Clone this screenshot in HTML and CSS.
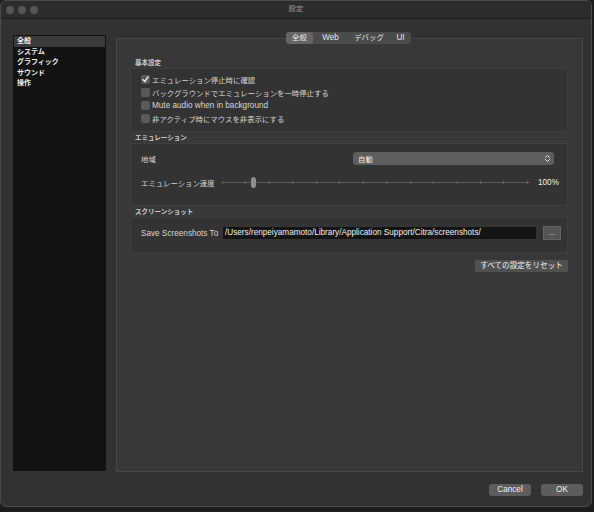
FILE: index.html
```html
<!DOCTYPE html>
<html lang="ja">
<head>
<meta charset="utf-8">
<title>設定</title>
<link rel="stylesheet" href="styles.css">
</head>
<body>
<div class="window">
  <div class="titlebar">
    <div class="lights"><span></span><span></span><span></span></div>
    <div class="title">設定</div>
  </div>
  <div class="main">
    <ul class="sidebar">
      <li class="sel">全般</li>
      <li>システム</li>
      <li>グラフィック</li>
      <li>サウンド</li>
      <li>操作</li>
    </ul>
    <div class="pane">
      <div class="tabs">
        <span class="tab t1 active">全般</span>
        <span class="tab t2">Web</span>
        <span class="tab t3">デバッグ</span>
        <span class="tab t4">UI</span>
      </div>

      <div class="gtitle first">基本設定</div>
      <div class="group g1">
        <label class="check"><span class="box on"><svg viewBox="0 0 9 9" width="9" height="9"><path d="M2 4.6 L3.8 6.6 L7 1.8" fill="none" stroke="#f2f2f2" stroke-width="1.4" stroke-linecap="round" stroke-linejoin="round"/></svg></span><span class="ja">エミュレーション停止時に確認</span></label>
        <label class="check"><span class="box"></span><span class="ja">バックグラウンドでエミュレーションを一時停止する</span></label>
        <label class="check"><span class="box"></span>Mute audio when in background</label>
        <label class="check"><span class="box"></span><span class="ja">非アクティブ時にマウスを非表示にする</span></label>
      </div>

      <div class="gtitle">エミュレーション</div>
      <div class="group g2">
        <div class="row region">
          <span class="lbl ja">地域</span>
          <div class="combo"><span class="ja">自動</span>
            <svg viewBox="0 0 7 9" width="7" height="9"><path d="M1.5 3.5 L3.5 1.5 L5.5 3.5 M1.5 5.5 L3.5 7.5 L5.5 5.5" fill="none" stroke="#e8e8e8" stroke-width="1" stroke-linecap="round" stroke-linejoin="round"/></svg>
          </div>
        </div>
        <div class="row speed">
          <span class="lbl slbl ja">エミュレーション速度</span>
          <div class="slider">
            <div class="track"></div>
            <div class="ticks">
              <i></i><i></i><i></i><i></i><i></i><i></i><i></i><i></i><i></i><i></i><i></i><i></i><i></i><i class="end"></i>
            </div>
            <div class="handle"></div>
          </div>
          <span class="pct">100%</span>
        </div>
      </div>

      <div class="gtitle">スクリーンショット</div>
      <div class="group g3">
        <div class="row shot">
          <span class="lbl plbl">Save Screenshots To</span>
          <div class="path">/Users/renpeiyamamoto/Library/Application Support/Citra/screenshots/</div>
          <button class="dots">...</button>
        </div>
      </div>

      <div class="resetrow"><button class="btn reset">すべての設定をリセット</button></div>
    </div>
  </div>
  <div class="footer">
    <button class="btn fbtn">Cancel</button>
    <button class="btn fbtn">OK</button>
  </div>
</div>
</body>
</html>
```

FILE: styles.css
```css
* { box-sizing: border-box; }
html, body {
  margin: 0;
  padding: 0;
  background: #1d1d1d;
  width: 594px;
  height: 512px;
  overflow: hidden;
}
body {
  font-family: "Liberation Sans", "Noto Sans CJK JP", sans-serif;
  font-size: 8.2px;
  color: #d6d6d6;
}
.ja { font-size: 7.4px; }
.window {
  width: 592px;
  height: 507px;
  background: #323232;
  border: 1px solid #4a4a4a;
  border-radius: 6px;
  overflow: hidden;
  display: flex;
  flex-direction: column;
}
.titlebar {
  height: 18px;
  flex: none;
  background: #2c2c2c;
  border-bottom: 1px solid #1c1c1c;
  position: relative;
  display: flex;
  align-items: center;
}
.lights {
  display: flex;
  gap: 4px;
  padding-left: 5px;
}
.lights span {
  width: 8px;
  height: 8px;
  border-radius: 50%;
  background: #555555;
}
.title {
  position: absolute;
  left: 0;
  right: 0;
  top: 3px;
  text-align: center;
  color: #9a9a9a;
  font-size: 7.4px;
  line-height: 10px;
}
.main {
  display: flex;
  padding: 16px 7px 0 12px;
  gap: 10px;
}
.sidebar {
  list-style: none;
  margin: 0;
  padding: 1px 1px 0;
  width: 93px;
  height: 436px;
  background: #121212;
  flex: none;
}
.sidebar li {
  height: 10.5px;
  line-height: 10.5px;
  padding-left: 3px;
  font-weight: bold;
  color: #eeeeee;
  font-size: 7px;
}
.sidebar li.sel {
  background: #3b3b3b;
}
.pane {
  position: relative;
  margin-top: 3px;
  width: 467px;
  height: 434px;
  background: #383838;
  border: 1px solid #474747;
  padding: 19px 14px 0 13px;
}
.tabs {
  position: absolute;
  top: -7px;
  left: 169px;
  display: flex;
  height: 12px;
  background: #4b4b4b;
  border-radius: 3px;
  overflow: hidden;
}
.tab {
  display: block;
  line-height: 12px;
  text-align: center;
  color: #e6e6e6;
  font-size: 7.4px;
}
.t2, .t4 { font-size: 8.2px; }
.tab.active { background: #656565; border-radius: 3px; }
.t1 { width: 27px; }
.t2 { width: 35px; }
.t3 { width: 42px; }
.t4 { width: 21px; }
.gtitle {
  font-size: 6.5px;
  line-height: 10px;
  height: 10px;
  font-weight: bold;
  color: #cccccc;
  padding-left: 5px;
  margin-top: 1px;
}
.gtitle.first { margin-top: 0; }
.group {
  background: #333333;
  border: 1px solid #3e3e3e;
  padding-left: 10px;
}
.g1 {
  height: 64px;
  padding-top: 4px;
}
.check {
  display: flex;
  align-items: center;
  height: 13px;
  gap: 1px;
}
.box {
  width: 9px;
  height: 9px;
  border-radius: 2px;
  background: #595959;
  margin-right: 1px;
  display: flex;
}
.g2 {
  height: 63px;
  padding-top: 8px;
  padding-right: 13px;
}
.row {
  display: flex;
  align-items: center;
  height: 13px;
}
.region { justify-content: space-between; }
.combo {
  width: 201px;
  height: 13px;
  background: #5e5e5e;
  border-radius: 3px;
  display: flex;
  align-items: center;
  justify-content: space-between;
  padding: 0 3px 0 5px;
  color: #ececec;
}
.speed {
  margin-top: 11px;
}
.slbl { width: 81px; flex: none; }
.slider {
  position: relative;
  width: 308px;
  height: 13px;
  flex: none;
}
.track {
  position: absolute;
  left: 0;
  right: 0;
  top: 6px;
  height: 1px;
  background: #5a5a5a;
}
.ticks {
  position: absolute;
  left: 0;
  right: 2px;
  top: 5px;
  height: 3px;
  display: flex;
  justify-content: space-between;
}
.ticks i {
  display: block;
  width: 1px;
  height: 3px;
  background: #5f6466;
}
.ticks i.end { background: #56676e; }
.handle {
  position: absolute;
  left: 29px;
  top: 1px;
  width: 5px;
  height: 11px;
  border-radius: 2.5px;
  background: #8c8c8c;
}
.pct {
  margin-left: 8px;
  color: #f0f0f0;
}
.g3 {
  height: 36px;
  padding-top: 8px;
}
.shot { height: 14px; }
.plbl { width: 82px; flex: none; white-space: nowrap; }
.path {
  width: 313px;
  height: 12px;
  line-height: 12px;
  background: #141414;
  color: #f2f2f2;
  padding-left: 2px;
  white-space: nowrap;
  overflow: hidden;
}
.dots {
  margin-left: 7px;
  width: 18px;
  height: 14px;
  padding: 0;
  background: #555555;
  border: 1px solid #636363;
  color: #e0e0e0;
  font-family: inherit;
  font-size: 7px;
  line-height: 10px;
}
.resetrow {
  display: flex;
  justify-content: flex-end;
  margin-top: 7px;
}
.btn {
  font-family: inherit;
  font-size: 8.2px;
  color: #f0f0f0;
  background: #5a5a5a;
  border: none;
  border-radius: 2px;
  height: 12px;
  line-height: 12px;
  padding: 0;
}
.reset {
  width: 93px;
  border-radius: 1px;
  background: #505050;
  font-size: 7.6px;
}
.footer {
  display: flex;
  justify-content: flex-end;
  gap: 10px;
  padding: 12px 8px 0 0;
}
.fbtn {
  width: 42px;
  border-radius: 3px;
  background: #5d5d5d;
}
```
